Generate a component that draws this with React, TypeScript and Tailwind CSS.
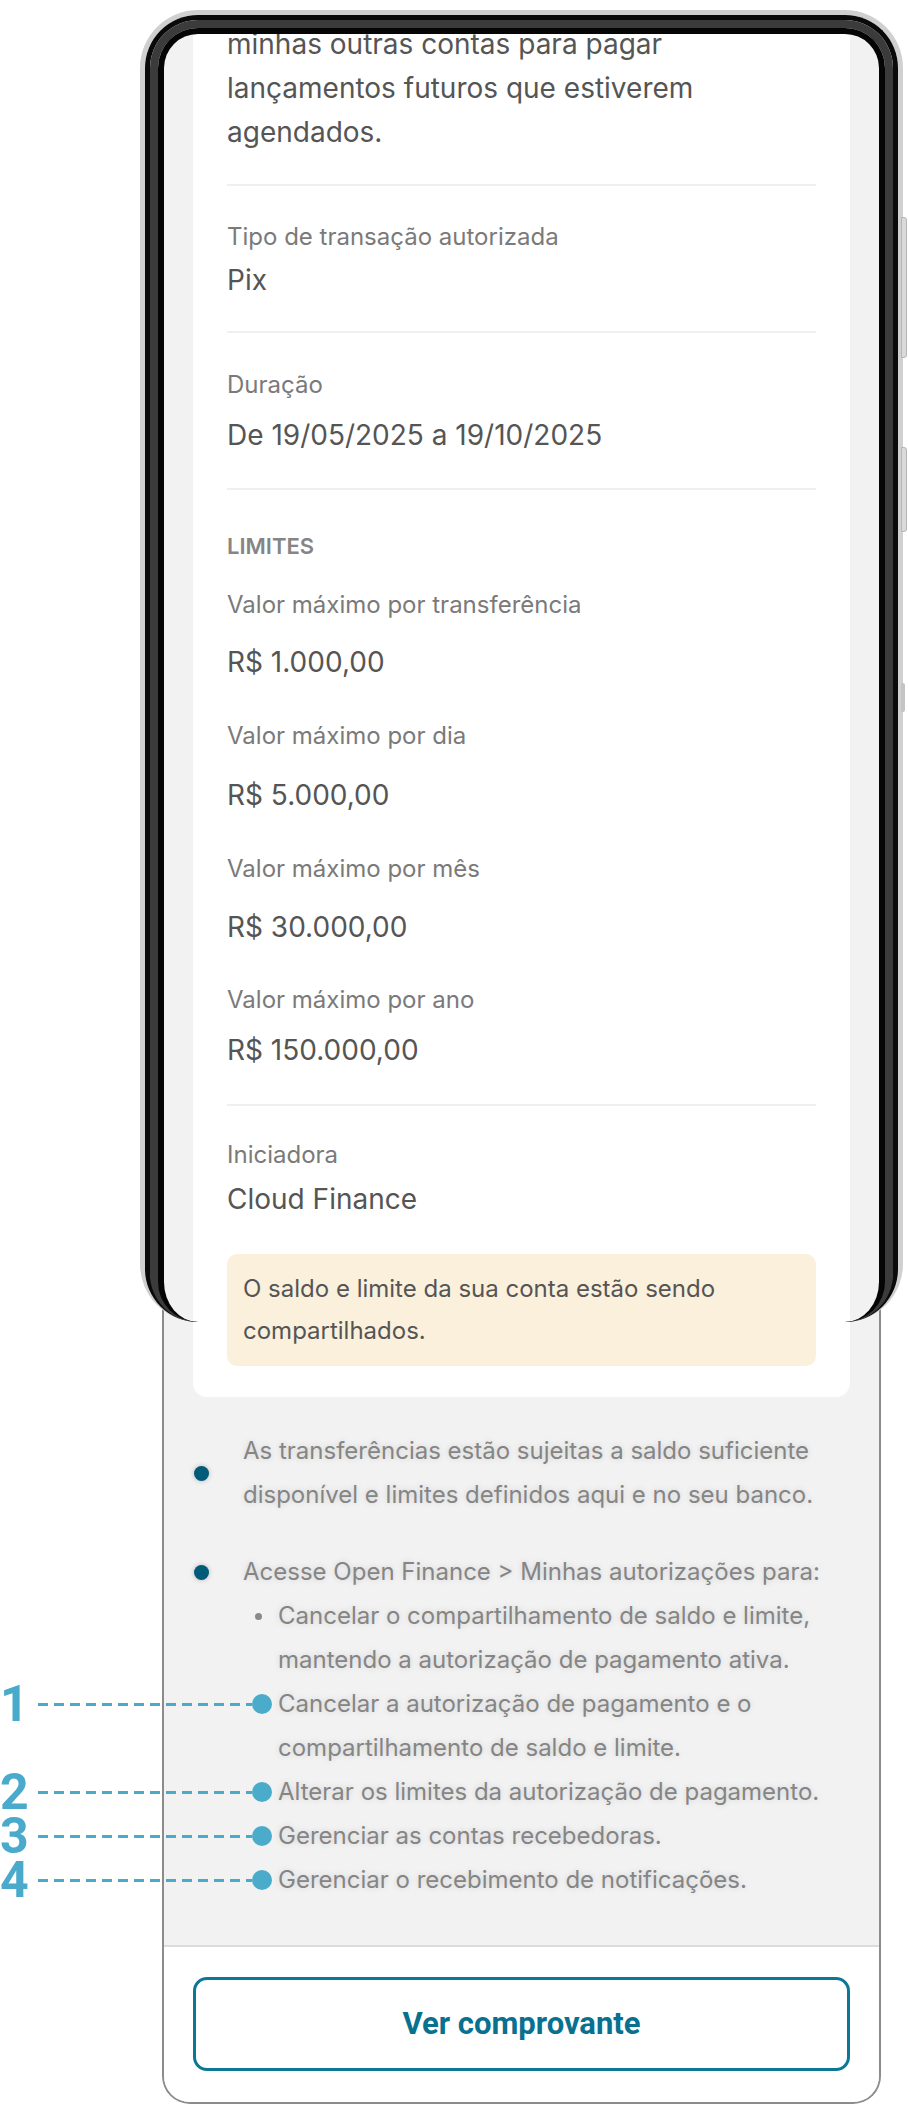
import React from "react";

const limites = [
	{ label: "Valor máximo por transferência", value: "R$ 1.000,00", labelMt: "mt-[28px]", valueMt: "mt-[23px]" },
	{ label: "Valor máximo por dia", value: "R$ 5.000,00", labelMt: "mt-[40px]", valueMt: "mt-[25px]" },
	{ label: "Valor máximo por mês", value: "R$ 30.000,00", labelMt: "mt-[40px]", valueMt: "mt-[24px]" },
	{ label: "Valor máximo por ano", value: "R$ 150.000,00", labelMt: "mt-[39px]", valueMt: "mt-[16px]" },
];

const subItems: { text: string; n?: number }[] = [
	{ text: "Cancelar o compartilhamento de saldo e limite, mantendo a autorização de pagamento ativa." },
	{ text: "Cancelar a autorização de pagamento e o compartilhamento de saldo e limite.", n: 1 },
	{ text: "Alterar os limites da autorização de pagamento.", n: 2 },
	{ text: "Gerenciar as contas recebedoras.", n: 3 },
	{ text: "Gerenciar o recebimento de notificações.", n: 4 },
];

const Separator = ({ mt }: { mt: string }) => <div className={`${mt} h-[2px] bg-[#efefef]`} />;

const Label = ({ children, mt }: { children: React.ReactNode; mt: string }) => (
	<p className={`${mt} text-[24px] leading-[32px] text-[#7a7a7a]`}>{children}</p>
);

const Value = ({ children, mt }: { children: React.ReactNode; mt: string }) => (
	<p className={`${mt} text-[28px] leading-[36px] text-[#555555]`}>{children}</p>
);

const Annotation = ({ n }: { n: number }) => (
	<div className="absolute left-[-243px] top-0 flex h-[44px] w-[272px] items-center [text-shadow:none]">
		<span className="w-[38px] font-['Roboto',sans-serif] text-[50px] font-bold leading-none text-[#49aacb]">
			{n}
		</span>
		<span className="h-[3px] flex-1 bg-[repeating-linear-gradient(90deg,#49aacb_0_10px,transparent_10px_16px)]" />
		<span className="h-[20px] w-[20px] rounded-full bg-[#4aabcb]" />
	</div>
);

export default function App() {
	return (
		<div className="relative h-[2104px] w-[908px] overflow-hidden bg-white font-['Inter','Noto_Sans',sans-serif]">
			<div className="pl-[162px] pt-[22px]">
				{/* tela */}
				<div className="w-[719px] rounded-t-[40px] rounded-b-[28px] border-x-2 border-b-2 border-[#8c8c8c] bg-[#f2f2f2]">
					<div className="px-[29px]">
						<div className="rounded-b-[14px] bg-white px-[34px] pb-[31px]">
							<p className="text-[28px] leading-[44px] text-[#555555]">
								<span className="block">minhas outras contas para pagar</span>
								<span className="block">lançamentos futuros que estiverem</span>
								<span className="block">agendados.</span>
							</p>
							<Separator mt="mt-[30px]" />
							<Label mt="mt-[35px]">Tipo de transação autorizada</Label>
							<Value mt="mt-[9px]">Pix</Value>
							<Separator mt="mt-[33px]" />
							<Label mt="mt-[36px]">Duração</Label>
							<Value mt="mt-[16px]">De 19/05/2025 a 19/10/2025</Value>
							<Separator mt="mt-[35px]" />
							<p className="mt-[41px] text-[22px] font-semibold leading-[30px] text-[#858585]">LIMITES</p>
							{limites.map((l) => (
								<div key={l.label}>
									<Label mt={l.labelMt}>{l.label}</Label>
									<Value mt={l.valueMt}>{l.value}</Value>
								</div>
							))}
							<Separator mt="mt-[36px]" />
							<Label mt="mt-[33px]">Iniciadora</Label>
							<Value mt="mt-[10px]">Cloud Finance</Value>
							<div className="mt-[37px] rounded-[10px] bg-[#fbf0dc] px-[16px] py-[14px] text-[24px] leading-[42px] text-[#555555]">
								O saldo e limite da sua conta estão sendo compartilhados.
							</div>
						</div>
					</div>

					<div className="pl-[30px] pr-[29px] pb-[43px] pt-[32px] text-[24px] leading-[44px] text-[#858585] [text-shadow:0_0_6px_rgba(0,0,0,0.15)]">
						<div className="flex items-center">
							<span className="h-[15px] w-[15px] shrink-0 rounded-full bg-[#005b78] shadow-[0_0_5px_rgba(0,0,0,0.25)]" />
							<p className="ml-[34px]">
								As transferências estão sujeitas a saldo suficiente disponível e limites definidos aqui e no seu banco.
							</p>
						</div>
						<div className="mt-[33px] flex items-center">
							<span className="h-[15px] w-[15px] shrink-0 rounded-full bg-[#005b78] shadow-[0_0_5px_rgba(0,0,0,0.25)]" />
							<p className="ml-[34px]">Acesse Open Finance &gt; Minhas autorizações para:</p>
						</div>
						<ul className="ml-[49px]">
							{subItems.map((item) => (
								<li key={item.text} className="relative flex">
									<span className="flex h-[44px] w-[35px] shrink-0 items-center pl-[12px]">
										<span className="h-[7px] w-[7px] rounded-full bg-[#8a8a8a]" />
									</span>
									<span>{item.text}</span>
									{item.n && <Annotation n={item.n} />}
								</li>
							))}
						</ul>
					</div>

					<div className="h-[2px] bg-[#dcdcdc]" />
					<div className="rounded-b-[26px] bg-white px-[29px] pb-[31px] pt-[30px]">
						<button className="flex h-[94px] w-full items-center justify-center rounded-[14px] border-[3px] border-[#0b7896] bg-white font-['Roboto',sans-serif] text-[31px] font-bold text-[#07718f]">
							Ver comprovante
						</button>
					</div>
				</div>
			</div>

			{/* moldura do celular */}
			<div className="pointer-events-none absolute left-[140px] top-[10px] h-[1312px] w-[763px] rounded-[58px] border-[5px] border-b-0 border-[#d0d0d0]">
				<div className="h-full rounded-[53px] border-[5px] border-b-0 border-[#0a0a0a]">
					<div className="h-full rounded-[48px] border-[8px] border-b-0 border-[#3b3b3b]">
						<div className="h-full rounded-[40px] border-[6px] border-b-0 border-[#050505]" />
					</div>
				</div>
			</div>
			<div className="absolute left-[901px] top-[217px] h-[141px] w-[6px] rounded-r-[3px] border border-[#b5b5b5] bg-[#dadada]" />
			<div className="absolute left-[901px] top-[447px] h-[85px] w-[6px] rounded-r-[3px] border border-[#b5b5b5] bg-[#dadada]" />
			<div className="absolute left-[901px] top-[683px] h-[29px] w-[4px] rounded-r-[2px] bg-[#c4c4c4]" />
		</div>
	);
}
